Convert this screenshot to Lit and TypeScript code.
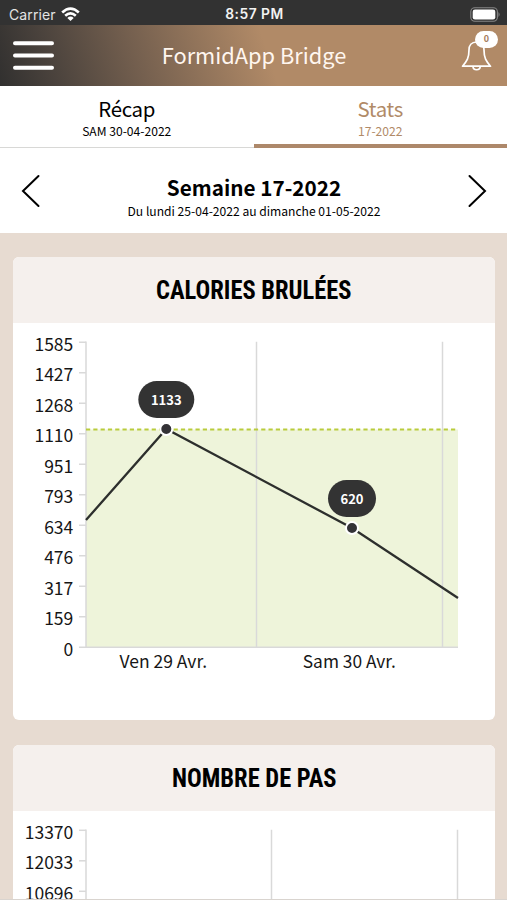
import { LitElement, html, svg, css, nothing } from "lit";
import { customElement, property } from "lit/decorators.js";

interface Point {
  x: number;
  y: number;
  value: number;
  pill: number;
}

interface Chart {
  title: string;
  titleWidth: number;
  ticks: string[];
  grid: number[];
  goal?: number;
  line?: string;
  points?: Point[];
  days?: { x: number; width: number; text: string }[];
}

const CHARTS: Chart[] = [
  {
    title: "CALORIES BRULÉES",
    titleWidth: 195.5,
    ticks: ["1585", "1427", "1268", "1110", "951", "793", "634", "476", "317", "159", "0"],
    grid: [243.5, 429.5],
    goal: 106.5,
    line: "73,197 153.3,106 339,205 445,275",
    points: [
      { x: 153.3, y: 106, value: 1133, pill: 56 },
      { x: 339, y: 205, value: 620, pill: 48 },
    ],
    days: [
      { x: 106.5, width: 87.5, text: "Ven 29 Avr." },
      { x: 289.8, width: 93, text: "Sam 30 Avr." },
    ],
  },
  {
    title: "NOMBRE DE PAS",
    titleWidth: 164.5,
    ticks: ["13370", "12033", "10696"],
    grid: [258.5, 444.5],
  },
];

const TOP = 19.3;
const STEP = 30.5;
const BOTTOM = TOP + STEP * 10;

@customElement("stat-card")
export class StatCard extends LitElement {
  @property({ attribute: false }) chart!: Chart;

  static styles = css`
    :host {
      display: block;
      height: 463px;
      border-radius: 6px;
      overflow: hidden;
      background: #fff;
    }
    .head {
      height: 66px;
      background: #f5f0ed;
      display: flex;
      align-items: center;
      justify-content: center;
    }
    .title,
    .plot {
      display: block;
      overflow: visible;
    }
    .title text {
      font: 700 25px "Roboto Condensed", Roboto, sans-serif;
      fill: #000;
    }
    .plot text {
      font: 400 17.5px "Noto Sans CJK JP", sans-serif;
      fill: #161616;
    }
    .axis {
      stroke: #d9d9d9;
      stroke-width: 1.5;
      fill: none;
    }
    .goal-area {
      fill: #eef4da;
    }
    .goal-line {
      stroke: #b9cc3c;
      stroke-width: 2;
      stroke-dasharray: 4.2 3.1;
    }
    .line {
      stroke: #2d2f2d;
      stroke-width: 2.3;
      fill: none;
    }
    .dot {
      fill: #333236;
      stroke: #fff;
      stroke-width: 2;
    }
    .pill {
      fill: #333;
    }
    .plot .value {
      font-size: 13px;
      font-weight: 700;
      fill: #fff;
    }
  `;

  render() {
    const c = this.chart;
    return html`
      <div class="head">
        <svg class="title" width=${c.titleWidth} height="34">
          <text x="0" y="26.4" textLength=${c.titleWidth} lengthAdjust="spacingAndGlyphs">${c.title}</text>
        </svg>
      </div>
      <svg class="plot" width="482" height="397" viewBox="0 0 482 397">
        ${c.goal ? svg`<rect class="goal-area" x="73" y=${c.goal} width="372" height=${BOTTOM - c.goal} />` : nothing}
        ${c.grid.map((x) => svg`<path class="axis" d="M${x} ${TOP - 0.5}V${BOTTOM}" />`)}
        <path class="axis" d="M73 ${TOP - 0.7}V${BOTTOM}H445" />
        ${c.ticks.map(
          (t, i) => svg`
            <path class="axis" d="M66 ${TOP + i * STEP}H73" />
            <text x="60.3" y=${TOP + i * STEP + 8.3} text-anchor="end">${t}</text>`
        )}
        ${c.goal ? svg`<path class="goal-line" d="M73 ${c.goal}H445" />` : nothing}
        ${c.line ? svg`<polyline class="line" points=${c.line} />` : nothing}
        ${c.points?.map(
          (p) => svg`
            <circle class="dot" cx=${p.x} cy=${p.y} r="6" />
            <rect class="pill" x=${p.x - p.pill / 2} y=${p.y - 48} width=${p.pill} height="37" rx="18.5" />
            <text class="value" x=${p.x} y=${p.y - 24.4} text-anchor="middle">${p.value}</text>`
        )}
        ${c.days?.map(
          (d) => svg`<text x=${d.x} y="345.3" textLength=${d.width} lengthAdjust="spacingAndGlyphs">${d.text}</text>`
        )}
      </svg>
    `;
  }
}

@customElement("app-root")
export class AppRoot extends LitElement {
  static styles = css`
    :host {
      display: flex;
      flex-direction: column;
      height: 900px;
      overflow: hidden;
      position: relative;
      background: #e7dbd1;
      color: #000;
      font-family: "Noto Sans CJK JP", sans-serif;
    }
    .status {
      flex: none;
      height: 25px;
      background: #323232;
      color: #fff;
      font: 400 14px/27px Inter, sans-serif;
      display: grid;
      grid-template-columns: 1fr auto 1fr;
      padding: 0 6px 0 9px;
    }
    .carrier {
      display: flex;
      align-items: center;
      gap: 5px;
      color: #e4e4e4;
      letter-spacing: 0.1px;
    }
    .clock {
      font-weight: 600;
      font-size: 13.8px;
      line-height: 28px;
      color: #f2f2f2;
      letter-spacing: 0.5px;
      margin-right: 1px;
    }
    .battery {
      justify-self: end;
      align-self: center;
    }
    .bar {
      flex: none;
      height: 61px;
      box-sizing: border-box;
      padding: 0 10px 0 13px;
      display: grid;
      grid-template-columns: 46px 1fr 46px;
      align-items: center;
      background: linear-gradient(72deg, #31302f 0, #4b433d 56px, #75604f 140px, #b18a67 265px);
    }
    .bar svg,
    .battery,
    .wifi,
    .arrow {
      display: block;
    }
    .app-title {
      text-align: center;
      color: #fff6ef;
      font-size: 21.8px;
      line-height: 30px;
      padding-bottom: 1px;
      margin-right: 2px;
    }
    .bell {
      position: relative;
      height: 61px;
    }
    .count {
      position: absolute;
      left: 24px;
      top: 6px;
      width: 23px;
      height: 17px;
      border-radius: 9px;
      background: #fff;
      color: #a67e5d;
      font: 700 9px/16px "Noto Sans CJK JP", sans-serif;
      text-align: center;
    }
    .tabs {
      flex: none;
      height: 62px;
      display: grid;
      grid-template-columns: 1fr 1fr;
      background: #fff;
    }
    .tab {
      box-sizing: border-box;
      text-align: center;
      border-bottom: 1px solid #d8d8d6;
      padding-top: 7px;
    }
    .tab.active {
      color: #b18a67;
      border-bottom: 4px solid #ad886a;
    }
    .name {
      font-size: 20.4px;
      line-height: 30px;
      letter-spacing: -0.3px;
    }
    .date {
      font-size: 12.1px;
      line-height: 16px;
    }
    .week {
      flex: none;
      height: 85px;
      background: #fff;
      display: flex;
      align-items: center;
      justify-content: space-between;
      padding: 0 20px 0 21px;
      box-sizing: border-box;
    }
    .range {
      text-align: center;
      padding-top: 12px;
    }
    .number {
      font-size: 20.7px;
      font-weight: 700;
      line-height: 28px;
    }
    .dates {
      font-size: 12.1px;
      line-height: 20px;
    }
    .cards {
      flex: 1;
      min-height: 0;
      padding: 24px 12px 0 13px;
      display: flex;
      flex-direction: column;
      gap: 24.5px;
    }
    stat-card {
      flex: none;
    }
    .edge {
      position: absolute;
      left: 0;
      right: 0;
      bottom: 0;
      height: 1px;
      background: #d9d4cf;
    }
  `;

  render() {
    return html`
      <div class="status">
        <div class="carrier">
          Carrier
          <svg class="wifi" width="19" height="15" viewBox="0 0 19 15" fill="none" stroke="#fff" stroke-width="2.6">
            <path d="M1.2 5.5Q9.5 -2.2 17.8 5.5" />
            <path d="M4.2 8.8Q9.5 4 14.8 8.8" />
            <path d="M9.5 14L6.3 10.9Q9.5 8.3 12.7 10.9Z" fill="#fff" stroke="none" />
          </svg>
        </div>
        <div class="clock">8:57 PM</div>
        <svg class="battery" width="31" height="15" viewBox="0 0 31 15">
          <rect x="0.8" y="0.8" width="26.6" height="13.4" rx="4" fill="none" stroke="#858585" stroke-width="1.1" />
          <rect x="2.7" y="2.5" width="22.6" height="10" rx="2.3" fill="#fff" />
          <path d="M28.5 5Q30.7 7.5 28.5 10Z" fill="#858585" />
        </svg>
      </div>
      <div class="bar">
        <svg width="41" height="32" viewBox="0 0 41 32" stroke="#fff" stroke-width="4" stroke-linecap="round">
          <path d="M2 3.300H39M2 15.500H39M2 27.700H39" />
        </svg>
        <div class="app-title">FormidApp Bridge</div>
        <div class="bell">
          <svg width="46" height="61" viewBox="451 25 46 61" fill="none" stroke="#fff" stroke-width="1.7" stroke-linejoin="round">
            <path d="M476.500 42C471.500 42 469 45.500 469 50C469 58 467 61 462.500 66.200H490.500C486 61 484 58 484 50C484 45.500 481.500 42 476.500 42Z" />
            <path d="M473 66.500C473 70.800 480.200 70.800 480.200 66.500" />
          </svg>
          <div class="count">0</div>
        </div>
      </div>
      <div class="tabs">
        <div class="tab">
          <div class="name">Récap</div>
          <div class="date">SAM 30-04-2022</div>
        </div>
        <div class="tab active">
          <div class="name">Stats</div>
          <div class="date">17-2022</div>
        </div>
      </div>
      <div class="week">
        <svg class="arrow" width="20" height="34" viewBox="0 0 20 34" fill="none" stroke="#000" stroke-width="2" stroke-linecap="round">
          <path d="M17.500 2L2 17L17.500 32" />
        </svg>
        <div class="range">
          <div class="number">Semaine 17-2022</div>
          <div class="dates">Du lundi 25-04-2022 au dimanche 01-05-2022</div>
        </div>
        <svg class="arrow" width="20" height="34" viewBox="0 0 20 34" fill="none" stroke="#000" stroke-width="2" stroke-linecap="round">
          <path d="M2.500 2L18 17L2.500 32" />
        </svg>
      </div>
      <div class="cards">${CHARTS.map((c) => html`<stat-card .chart=${c}></stat-card>`)}</div>
      <div class="edge"></div>
    `;
  }
}
